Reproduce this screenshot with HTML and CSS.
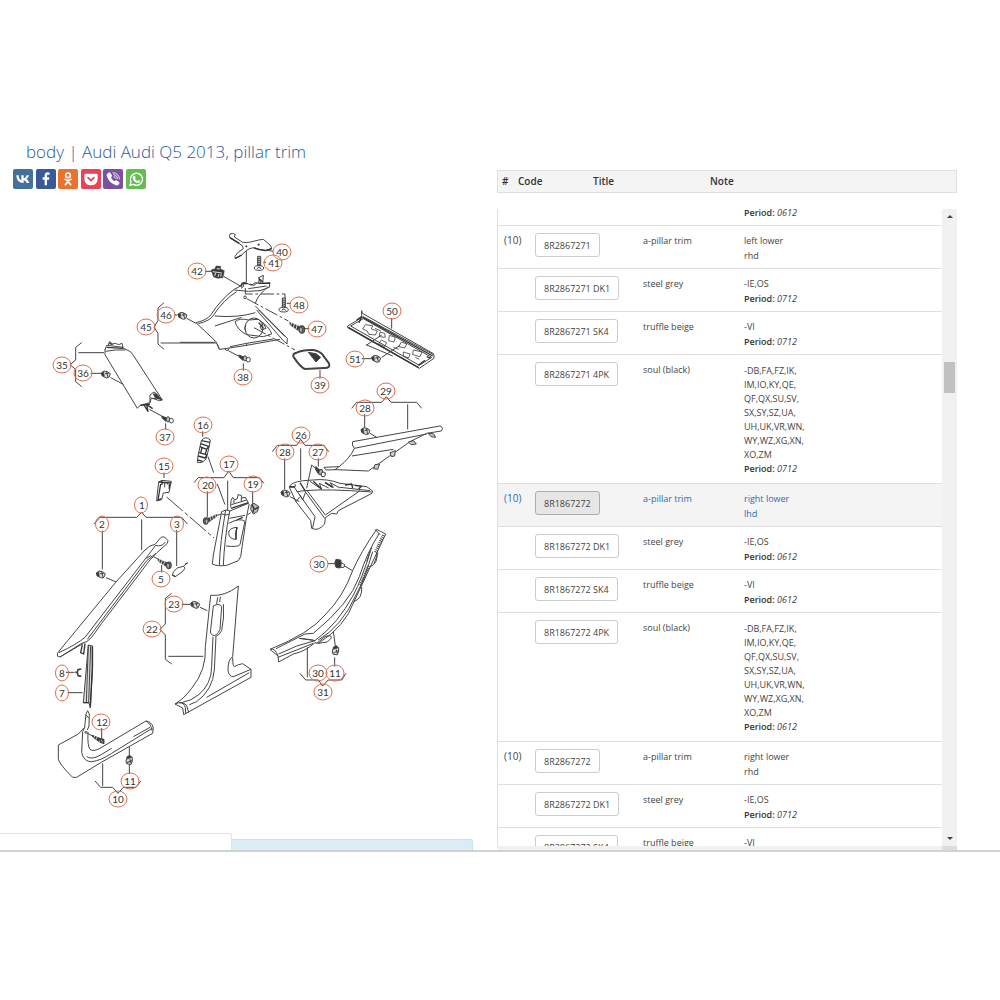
FILE: index.html
```html
<!DOCTYPE html>
<html lang="en">
<head>
<meta charset="utf-8">
<title>body | Audi Audi Q5 2013, pillar trim</title>
<link rel="stylesheet" href="styles.css">
</head>
<body>
<main class="page">
<section class="diagram-col">
<h1 class="title">body | Audi Audi Q5 2013, pillar trim</h1>
<nav class="share" aria-label="Share">
<a href="#vk" class="share-link vk" aria-label="VK"><svg viewBox="0 0 60 60"><path fill="#fff" d="M31 42C18 42 11 34 10 19h7c0 10 5 14 8 15V19h7v9c4 0 8-5 9-9h7c-1 5-5 9-8 11 3 2 7 5 9 12h-8c-1-4-5-7-9-8v8z"/></svg></a>
<a href="#facebook" class="share-link facebook" aria-label="Facebook"><svg viewBox="0 0 60 60"><path fill="#fff" d="M26 49V32h-6v-7h6v-5c0-7 4-10 9-10l6 1v6h-4c-3 0-4 1-4 4v4h7l-1 7h-6v17z"/></svg></a>
<a href="#ok" class="share-link ok" aria-label="Odnoklassniki"><svg viewBox="0 0 60 60" fill="none" stroke="#fff" stroke-width="5" stroke-linecap="round"><circle cx="30" cy="19" r="7"/><path d="M21 31q9 6 18 0M30 35v3L22 47M30 38l8 9"/></svg></a>
<a href="#pocket" class="share-link pocket" aria-label="Pocket"><svg viewBox="0 0 60 60"><path fill="#fff" d="M14 14h32q4 0 4 4v11q-1 19-20 20Q11 48 10 29V18q0-4 4-4z"/><path d="M21 26l9 9 9-9" fill="none" stroke="#ee4056" stroke-width="5" stroke-linecap="round"/></svg></a>
<a href="#viber" class="share-link viber" aria-label="Viber"><svg viewBox="0 0 60 60"><path fill="#fff" d="M13 14l5-4q2-1 4 2l5 7q1 3-3 6 3 8 11 12 3-4 6-3l7 5q3 2 1 5-4 7-10 5Q17 40 11 20q-1-4 2-6z"/><path fill="none" stroke="#fff" stroke-width="2.5" stroke-linecap="round" d="M30 11q18 1 19 19M32 17q11 1 11 12M33 23q4 0 5 5"/></svg></a>
<a href="#whatsapp" class="share-link whatsapp" aria-label="WhatsApp"><svg viewBox="0 0 60 60"><path fill="none" stroke="#fff" stroke-width="4" d="M12 49l3-11a18 18 0 1 1 7 8z"/><path fill="#fff" d="M23 20h3l3 6-2 4q3 5 7 6l3-3 6 3q0 6-7 6-14-3-16-16 0-4 3-6z"/></svg></a>
</nav>

<svg class="diagram" viewBox="0 200 497 632" role="img" aria-label="Exploded view of pillar trim parts">
<defs>
<ellipse id="ring" rx="9" ry="8"/>
<ellipse id="ring-s" rx="6.5" ry="8"/>
<g id="clip"><path fill="#ddd" d="M-13-4L-5-10 5-8 14-2 10 9 3 11-10 5z"/><path class="dark" stroke-width="1.5" d="M-13-4L-6-8-4 6-11 4z"/><path d="M3-7L7 9M-2-2L9-3"/></g>
<g id="screw"><path class="dark" stroke-width="1.5" d="M-20-11L2-2-1 7-19-5z"/><path stroke="#fff" stroke-width="1.8" d="M-15-12l-3 9M-9-9l-3 10M-3-6l-3 10"/><ellipse cx="7" cy="5" rx="6" ry="8" fill="#aaa"/><path d="M4-2l6 5-2 8"/></g>
<g id="bolt"><path fill="#ccc" d="M-4-32h9V0h-9z"/><path d="M-5-27l10 3m-10 3l10 3m-10 3l10 3m-10 3l10 3"/><ellipse rx="14" ry="7" fill="#fff" cy="3"/><path d="M-5 6l3-5h5l3 5"/></g>
<g id="pin"><path class="dark" d="M-16-10L0-4-3 6-14-3z"/><ellipse cx="3" cy="0" rx="5" ry="8" fill="#bbb"/><ellipse cx="13" cy="4" rx="6" ry="7" fill="#fff"/></g>
</defs>

<g class="ink" transform="translate(180 220) scale(.33333)">
<path fill="#fff" d="M150 42Q157 38 166 43L163 51 188 67Q200 69 212 66L236 60 250 58 272 77 275 86 257 91 238 88 222 83Q208 84 200 91L185 105 166 116 165 109Q172 95 190 86 190 76 178 71L150 54Q147 47 150 42z"/>
<path class="thick" d="M150 53L178 70M275 86L257 92 238 89 222 84M166 115L185 105"/>
<circle cx="236" cy="74" r="2" class="dark"/><circle cx="199" cy="79" r="2" class="dark"/>
<path d="M262 91L280 94M199 92V186M250 127H258M75 154H96M132 170L183 199"/>
<use href="#bolt" x="237" y="141"/>
<path class="dark" stroke-width="1.5" d="M93 150L105 146 108 138 122 139 122 147 133 152 129 173 113 175 101 171z"/><path stroke="#fff" stroke-width="2.5" d="M98 155l28 4M104 168l3-9M114 171l3-9M110 146l10 1M122 170l2-8"/>
<path d="M48 308Q82 300 92 285 125 235 163 208L182 198 185 190Q195 182 205 192L215 196 225 188 236 190 238 172 250 166 248 190 270 188 268 202 240 212 205 214 163 210"/>
<path d="M55 311Q90 303 101 285 130 240 170 215M205 206L260 198M210 192L222 196 232 188M236 172L242 190M183 205L190 200 190 192"/>
<path class="thick" d="M183 200L187 190 203 191M236 190L270 190M238 176l10 10"/>
<path d="M265 200Q233 225 226 250M226 258L322 355 321 372 308 360 230 270M236 270L315 350"/>
<path d="M48 308L108 365 118 388 135 386 200 376 300 358M118 388L112 372M135 386Q140 398 148 385M150 380L200 370 280 357M200 370V377"/>
<path d="M104 288Q175 294 226 278M105 318L185 292M165 305Q180 293 205 300L235 298Q270 322 275 342L250 350 200 344Q172 330 165 305z"/>
<ellipse cx="222" cy="324" rx="27" ry="30"/><path d="M198 335q-8-10 0-20M240 320L250 310 258 325 245 330z"/><path class="thick" d="M236 308L250 325"/>
<circle cx="195" cy="232" r="4" fill="#fff"/>
<path stroke-dasharray="40 8 8 8" d="M196 204V222H315V236M200 236L325 303M222 323L345 390"/>
<use href="#bolt" x="311" y="266"/><path d="M320 250H332M375 326H388"/>
<g transform="translate(356 322) scale(1.35)"><use href="#screw"/></g>
<path stroke-width="6" fill="#fff" d="M350 398Q370 388 400 390 420 394 427 403L447 430Q452 445 432 444L375 447Q362 443 340 410 338 400 350 398z"/>
<path class="dark" d="M385 397L408 401 422 412 408 426z"/><path d="M420 450V476M145 392L175 408M190 430V452M0 367H105"/>
<use href="#pin" x="192" y="415"/>
<path d="M503 318L550 290 762 405 762 415 718 445 503 323zM545 272L547 280 762 402M545 272V288M550 296L755 412 718 436 512 318z"/>
<path class="thick" d="M548 292L758 408M505 322L716 443M530 300l15-10-8 18M715 436l20-15M740 410l12 5"/>
<path d="M635 294V326M545 416H575M605 412L660 376M560 375L605 345M558 374L638 408"/>
<path stroke-width="2.5" d="M556 314l22 3-4 10 18 6-6 12-20-2-4-10-14-6zM600 336l14 4 2 12-18-2zM628 346l18 6-4 14-16-4zM664 366l16 6-6 12-18-4zM700 390l26 6-6 14-22-6zM585 325l18 8M604 360l16 8-6 12-18-8zM640 382l16 6M670 396l20 6-4 12-16-6zM706 412l12 6"/>
<use href="#clip" x="588" y="416"/>
<use href="#clip" x="7" y="287"/><path d="M20 295L48 310M-18 285H-8"/>
</g>

<g class="ink" transform="translate(40 330) scale(.33333)">
<path d="M372-82L354-66V-28L342-9 354 10V42L372 58M362 39H530"/>
<path d="M125 38L107 52V90L90 104 107 118V155L125 170M115 68H192M152 130H183M212 143L250 163"/>
<use href="#clip" x="197" y="133"/>
<path d="M195 58V74L292 235 300 226 330 218M250 55Q275 64 280 76L367 210 358 212 334 204 330 218M195 60L200 46 250 52M205 45L208 35 218 42 226 40 236 44 246 40 249 54M197 64Q225 58 256 60"/>
<path class="thick" d="M200 52L250 55M208 40L218 44M310 222L324 244 320 224 338 236M302 226L330 222"/>
<path d="M330 218V195L342 186 350 192M338 205l20 0"/><path class="dark" d="M340 192L350 192 366 210 346 203z"/>
<path d="M328 238L365 258M377 280V299"/>
<use href="#pin" x="381" y="268"/>
</g>

<g class="ink" transform="translate(130 410) scale(.33333)">
<path d="M218 64V80M102 188V204"/>
<path fill="#fff" d="M214 92Q225 76 241 90L238 108 229 145Q218 162 202 157L204 138z"/>
<path class="thick" d="M214 92L240 97M212 101L236 109 230 118 210 110M207 128L230 134 226 144 204 138M203 150L218 154M216 112l-4 18M230 118l-4 14"/>
<path fill="#fff" d="M86 216L96 211 124 214 122 222 117 247 100 249 95 269 80 273 82 250z"/>
<path class="thick" d="M86 216L124 219M92 222L84 270 94 266M96 211V224M118 222V238"/><path d="M104 218v14M112 216v8"/>
<path stroke-dasharray="64 8 12 8" d="M110 261L252 384"/>
<path d="M192 218L205 203H282L296 183 310 203H388L402 220M293 212V300M232 244V322M234 140L251 188M262 222L285 284M368 244V282M256 317L276 312M352 315L362 308"/>
<g transform="translate(236 327) scale(-1.2 1.2)"><use href="#screw"/></g>
<path fill="#bbb" d="M364 284L372 280 387 290 382 305 370 312 362 298z"/><path class="thick" d="M366 284l6 12-4 12M384 292l-10 6"/>
<path fill="#fff" d="M275 305L288 300 300 303 355 280 357 284 348 330 332 440 325 452 290 466Q262 470 247 462L250 435z"/>
<path d="M299 303Q283 390 280 466M287 300Q270 400 268 467M276 312Q290 318 298 312M298 325L345 316M296 340Q330 322 345 334L330 404Q325 412 288 408"/>
<path d="M320 352Q296 354 296 370 298 388 318 388z"/><path class="thick" d="M322 352Q314 370 319 388M320 330l18-8"/>
<path d="M302 292L303 272 308 262 314 270 322 266 324 254 334 256 336 264 346 262 355 278M312 270V280M334 262V274M304 284L350 270"/><path class="thick" d="M303 295L355 278"/>
</g>

<g class="ink" transform="translate(260 370) scale(.33333)">
<path d="M275 115L290 97H365L379 80 393 97H470L485 115M443 103V178M314 132V172M330 190L350 202"/>
<use href="#clip" x="316" y="183"/>
<path d="M278 215L540 168Q552 173 544 183L500 190 450 215 325 303 228 299 198 300 192 292 237 290Q270 265 283 235 274 225 278 215zM283 235L500 192M276 258L400 238M237 290L224 300"/>
<path fill="#ccc" d="M505 190l8 10 14 2-6-10zM445 216l8 8 16-2-8-10zM390 248l4 12 10-2 2-16zM345 284l-4 12 12 2 6-16z"/>
<path d="M37 245L52 226H110L122 208 135 226H192L206 245M122 235V330M74 265V358M175 265V290M90 380L118 395M168 296L155 285 140 355"/>
<use href="#clip" x="76" y="370"/><g transform="translate(179 305) rotate(20)"><use href="#pin"/></g>
<path d="M88 352Q90 337 130 332L160 330Q200 325 240 340L320 350 338 363 336 370 235 422 230 432 215 430 196 443 194 462Q175 485 155 475L152 452 108 395z"/>
<path d="M100 348L165 440 158 474M132 360L194 445M140 360L196 435M110 365L135 362Q200 356 335 366M196 435L300 362M90 352L106 350 105 342M118 372L128 390 137 366M108 395L120 380M150 334L185 358 178 340 206 354M195 336L220 352 210 338 240 354M240 352L330 362"/>
<path class="thick" d="M88 350L104 351M120 338L135 362M160 334L184 356M195 338L218 352M255 345L275 342 278 354M285 346L304 349 296 357"/>
</g>

<g class="ink" transform="translate(40 480) scale(.33333)">
<path d="M162 132L180 112H290L305 97 318 112H425L442 132M305 118V210M187 152V268M410 150V258M198 293L228 306M340 230L360 240M365 255V277"/>
<use href="#clip" x="182" y="283"/><g transform="translate(378 250) scale(1.2)"><use href="#screw"/></g>
<path fill="#fff" d="M52 528Q50 520 60 510L228 306 315 210Q330 195 345 193L362 173Q372 165 384 182L382 190 350 219 330 240 185 430 155 472Q142 488 125 490L60 531z"/>
<path d="M57 518Q112 492 135 472L325 225 347 196Q365 202 376 186M142 478L320 242 348 220M60 531L130 490M320 235l12-8 6 6"/>
<path d="M397 285Q397 275 412 264L430 259Q440 263 426 276L406 290zM430 259L443 248"/><path class="thick" d="M397 285L406 290M436 252l6-3M127 494L122 518 131 522 135 490"/>
<path d="M425 373H450M480 382L502 392M395 340L376 355V432L360 448 376 465V538L395 552M385 529H490"/>
<use href="#clip" x="465" y="374"/>
<path d="M512 346Q555 350 595 318L578 530Q564 538 564 570 566 590 580 590L633 568 608 551Q596 553 583 560 578 560 578 532M512 346L496 500Q500 570 455 625 430 658 405 672L428 684 431 704 633 592V568M533 352L530 372M541 350L539 366"/>
<path d="M520 378Q538 368 545 380L540 448Q530 470 518 466 508 460 512 448zM550 372Q554 410 545 452 538 466 526 470M519 470L515 560Q515 612 475 645 455 662 425 668M528 470L523 570Q518 630 470 665L448 674M405 672Q425 662 440 676L446 698M418 668Q432 668 436 682L437 702M500 652L628 578"/>
</g>

<g class="ink" transform="translate(40 640) scale(.33333)">
<path d="M78 97H104M83 158H128"/><path stroke-width="5" d="M124 87l-10 2-2 8 2 10 10 2M106 97h6"/>
<path fill="#ddd" d="M145 15L158 18V80L151 204 147 188H130z"/><path d="M145 15L139 188M152 17L146 188"/><path class="thick" d="M157 20V85L151 200M130 188h17"/>
<path d="M55 315L115 282 134 262 138 222 143 212 148 222 147 258 142 270M138 225L147 235M55 315V358Q60 375 98 412L110 412 182 368 338 280 340 262Q334 245 318 243L180 325Q160 336 150 328 142 318 144 276M128 275L125 338Q132 366 155 365 182 362 215 340L338 264M140 350Q155 360 180 346L215 325M280 290L330 262M318 243Q334 252 336 272M134 262L128 275"/>
<circle cx="138" cy="277" r="3"/><path d="M142 280L158 288M185 264V296M268 320V346M268 374V402M188 370V438M165 423L182 442H218L234 460 250 442H288L302 423"/>
<path class="dark" d="M156 286L180 295 176 304 158 291zM180 295l12 3v13l-12-4z"/><path stroke="#fff" stroke-width="2" d="M165 286l-4 9M172 289l-4 10M184 299l4 8"/>
<g transform="translate(268 360) rotate(80)"><use href="#clip"/></g>
</g>

<g class="ink" transform="translate(250 520) scale(.33333)">
<path d="M233 131H252M280 136L308 152M250 335L256 378M254 412V440M172 382V472M150 460L167 480H205L218 498 235 480H275L288 460"/>
<path class="dark" d="M258 118l14 2 4 20-8 4-10-2-4-12z"/><path fill="#fff" d="M274 128l10 6-2 8-10 0z"/>
<g transform="translate(257 391) rotate(80)"><use href="#clip"/></g>
<path d="M380 28L407 42 312 245Q285 320 205 370L195 368Q165 395 130 402L86 426 84 408 60 388Q180 340 225 285 280 230 308 152 330 100 380 28z"/>
<path d="M388 40Q352 95 328 170 300 250 190 340L165 342 78 386M375 28L390 44M365 82Q335 180 310 225 265 310 195 362L148 355M368 95Q345 175 318 225 275 320 205 360M86 402Q140 374 195 362M84 412Q140 390 190 370M60 388Q75 382 84 408M380 98Q386 130 360 140M335 200Q338 235 312 245M200 370L225 350Q245 342 244 354L232 366 205 370M384 98L372 132M148 355L190 360M360 95L350 125"/>
<path stroke-width="9" stroke-dasharray="3 3" d="M400 45L376 98M356 138L332 196"/>
</g>

<g class="rings">
<use href="#ring" x="282" y="252"/><use href="#ring" x="273" y="263"/><use href="#ring" x="197" y="271"/><use href="#ring" x="299" y="305"/><use href="#ring" x="317" y="329"/><use href="#ring" x="166" y="315"/><use href="#ring" x="146" y="327"/><use href="#ring" x="392" y="311"/><use href="#ring" x="355" y="359"/><use href="#ring" x="243" y="377"/><use href="#ring" x="320" y="385"/><use href="#ring" x="62" y="365"/><use href="#ring" x="83" y="373"/><use href="#ring" x="165" y="437"/><use href="#ring" x="203" y="425"/><use href="#ring" x="386" y="391"/><use href="#ring" x="365" y="408"/><use href="#ring" x="301" y="435"/><use href="#ring" x="285" y="452"/><use href="#ring" x="318" y="452"/><use href="#ring" x="164" y="466"/><use href="#ring" x="229" y="464"/><use href="#ring" x="207" y="485"/><use href="#ring" x="253" y="484"/><use href="#ring-s" x="141" y="505"/><use href="#ring-s" x="102" y="524"/><use href="#ring-s" x="177" y="524"/><use href="#ring" x="161" y="579"/><use href="#ring" x="319" y="564"/><use href="#ring" x="174" y="604"/><use href="#ring" x="152" y="629"/><use href="#ring-s" x="62" y="673"/><use href="#ring-s" x="62" y="693"/><use href="#ring" x="318" y="673"/><use href="#ring" x="335" y="673"/><use href="#ring" x="323" y="692"/><use href="#ring" x="101" y="722"/><use href="#ring" x="130" y="781"/><use href="#ring" x="118" y="799"/>
</g>
<g class="nums">
<text x="282" y="256">40</text><text x="274" y="267">41</text><text x="197" y="275">42</text><text x="299" y="309">48</text><text x="317" y="333">47</text><text x="166" y="319">46</text><text x="146" y="331">45</text><text x="392" y="315">50</text><text x="355" y="363">51</text><text x="243" y="381">38</text><text x="320" y="389">39</text><text x="62" y="369">35</text><text x="83" y="377">36</text><text x="165" y="441">37</text><text x="203" y="429">16</text><text x="386" y="395">29</text><text x="365" y="412">28</text><text x="301" y="439">26</text><text x="285" y="456">28</text><text x="318" y="456">27</text><text x="164" y="470">15</text><text x="229" y="468">17</text><text x="208" y="489">20</text><text x="253" y="488">19</text><text x="142" y="509">1</text><text x="102" y="528">2</text><text x="177" y="528">3</text><text x="161" y="583">5</text><text x="319" y="568">30</text><text x="174" y="608">23</text><text x="152" y="633">22</text><text x="62" y="677">8</text><text x="62" y="697">7</text><text x="318" y="677">30</text><text x="335" y="677">11</text><text x="323" y="696">31</text><text x="102" y="726">12</text><text x="130" y="785">11</text><text x="118" y="803">10</text>
</g>
</svg>

<div class="panels"><div class="panel status"></div><div class="panel info"></div></div>
</section>

<section class="parts-col">
<table class="parts-head">
<thead><tr><th class="h-num" scope="col">#</th><th class="h-code" scope="col">Code</th><th class="h-title" scope="col">Title</th><th scope="col">Note</th></tr></thead>
</table>
<div class="list">
<div class="rows">
<table class="parts">
<tbody>
<tr><td class="num"></td><td class="code"></td><td class="name"></td><td>&nbsp;<br><b>Period:</b> <i>0612</i></td></tr>
<tr><td class="num">(10)</td><td class="code"><button type="button">8R2867271</button></td><td class="name">a-pillar trim</td><td>left lower<br>rhd</td></tr>
<tr><td class="num"></td><td class="code"><button type="button">8R2867271 DK1</button></td><td class="name">steel grey</td><td>-IE,OS<br><b>Period:</b> <i>0712</i></td></tr>
<tr><td class="num"></td><td class="code"><button type="button">8R2867271 SK4</button></td><td class="name">truffle beige</td><td>-VI<br><b>Period:</b> <i>0712</i></td></tr>
<tr><td class="num"></td><td class="code"><button type="button">8R2867271 4PK</button></td><td class="name">soul (black)</td><td class="codes">-DB,FA,FZ,IK,<br>IM,IO,KY,QE,<br>QF,QX,SU,SV,<br>SX,SY,SZ,UA,<br>UH,UK,VR,WN,<br>WY,WZ,XG,XN,<br>XO,ZM<br><b>Period:</b> <i>0712</i></td></tr>
<tr class="active"><td class="num">(10)</td><td class="code"><button type="button">8R1867272</button></td><td class="name">a-pillar trim</td><td>right lower<br>lhd</td></tr>
<tr><td class="num"></td><td class="code"><button type="button">8R1867272 DK1</button></td><td class="name">steel grey</td><td>-IE,OS<br><b>Period:</b> <i>0612</i></td></tr>
<tr><td class="num"></td><td class="code"><button type="button">8R1867272 SK4</button></td><td class="name">truffle beige</td><td>-VI<br><b>Period:</b> <i>0612</i></td></tr>
<tr><td class="num"></td><td class="code"><button type="button">8R1867272 4PK</button></td><td class="name">soul (black)</td><td class="codes">-DB,FA,FZ,IK,<br>IM,IO,KY,QE,<br>QF,QX,SU,SV,<br>SX,SY,SZ,UA,<br>UH,UK,VR,WN,<br>WY,WZ,XG,XN,<br>XO,ZM<br><b>Period:</b> <i>0612</i></td></tr>
<tr><td class="num">(10)</td><td class="code"><button type="button">8R2867272</button></td><td class="name">a-pillar trim</td><td>right lower<br>rhd</td></tr>
<tr><td class="num"></td><td class="code"><button type="button">8R2867272 DK1</button></td><td class="name">steel grey</td><td>-IE,OS<br><b>Period:</b> <i>0712</i></td></tr>
<tr><td class="num"></td><td class="code"><button type="button">8R2867272 SK4</button></td><td class="name">truffle beige</td><td>-VI<br><b>Period:</b> <i>0712</i></td></tr>
</tbody>
</table>
</div>
<div class="vbar"><span class="arrow up"></span><span class="thumb"></span><span class="arrow down"></span></div>
</div>
<div class="hbar"><span class="corner"></span></div>
</section>
</main>
</body>
</html>
```
FILE: styles.css
```css
* { box-sizing: border-box; }
body {
  margin: 0;
  background: #fff;
  color: #444;
  font: 9px/15px "Open Sans", "Noto Sans", sans-serif;
}
.page {
  display: grid;
  grid-template-columns: minmax(0, 497fr) minmax(0, 460fr);
  padding: 140px 43px 0 0;
  border-bottom: 2px solid #d2d2d2;
}
.title {
  margin: 0 0 5px;
  padding-left: 26px;
  font-size: 17px;
  line-height: 24px;
  font-weight: 300;
  color: #2a5a9e;
}
.share {
  display: flex;
  justify-content: space-between;
  width: 133px;
  margin: 0 0 11px 13px;
}
.share-link { width: 20px; height: 20px; border-radius: 2px; }
.share-link svg { display: block; width: 20px; height: 20px; }
.vk { background: #44719b; }
.facebook { background: #3b5998; }
.ok { background: #eb722e; }
.pocket { background: #ee4056; }
.viber { background: #7b519d; }
.whatsapp { background: #65bc54; }

.diagram { display: block; width: 100%; height: auto; }
.ink { fill: none; stroke: #444; stroke-width: 3; stroke-linejoin: round; }
.dark { fill: #3a3a3a; }
.thick { stroke: #333; stroke-width: 4; }
.rings { fill: none; stroke: #dc6f4c; stroke-width: 1; }
.nums { fill: #333; font: 10px Lato, sans-serif; text-anchor: middle; }

.panels { display: flex; align-items: flex-end; height: 18px; padding-right: 24px; }
.panel { flex: 241; }
.status { flex: 232; height: 17px; border: 1px solid #e2e2e2; border-width: 1px 1px 0 0; border-radius: 0 3px 0 0; }
.info { height: 11px; background: #d9edf7; border: 1px solid #c8e5ee; border-width: 1px 1px 0 0; border-radius: 0 3px 0 0; }

.parts-col { padding-top: 30px; }
.parts-head {
  width: 100%;
  margin-bottom: 16px;
  table-layout: fixed;
  border-collapse: separate;
  border-spacing: 0;
  border: 1px solid #e0e0e0;
  background: #f4f4f4;
  color: #333;
  font-size: 10px;
}
.parts-head th { padding: 3px 0 3px 4px; font-weight: 600; text-align: left; }
.parts-head .h-num { width: 16px; }
.parts-head .h-code { width: 75px; }
.parts-head .h-title { width: 117px; }

.list { display: flex; height: 637px; overflow: hidden; border-left: 1px solid #e0e0e0; }
.rows { flex: 1; overflow: hidden; }
.parts { width: 100%; margin-top: -26px; table-layout: fixed; border-collapse: separate; border-spacing: 0; }
.parts td { height: 43px; padding: 7px 0 1px; vertical-align: top; border-bottom: 1px solid #e0e0e0; }
.parts .codes { height: 129px; padding-top: 9px; line-height: 14px; }
.parts .num { width: 37px; padding-left: 6px; font-size: 10px; }
.parts .code { width: 108px; }
.parts .name { width: 101px; }
.parts b { font-weight: 600; color: #333; }
.parts .active td { background: #f4f4f4; color: #2a6cb5; }
.parts .code button {
  display: block;
  height: 24px;
  padding: 0 8px;
  font: inherit;
  color: #444;
  background: #fff;
  border: 1px solid #ccc;
  border-radius: 3px;
}
.parts .active button { background: #e6e6e6; border-color: #adadad; }

.vbar { display: flex; flex-direction: column; align-items: center; width: 15px; padding: 6px 0; background: #f1f1f1; }
.thumb { width: 11px; height: 31px; margin: 144px 0 auto; background: #c1c1c1; }
.arrow { border: 3px solid transparent; }
.up { border-top-width: 0; border-bottom-color: #444; }
.down { border-bottom-width: 0; border-top-color: #444; }
.hbar { display: flex; justify-content: flex-end; height: 4px; background: #f1f1f1; }
.corner { width: 15px; background: #dcdcdc; }
```
